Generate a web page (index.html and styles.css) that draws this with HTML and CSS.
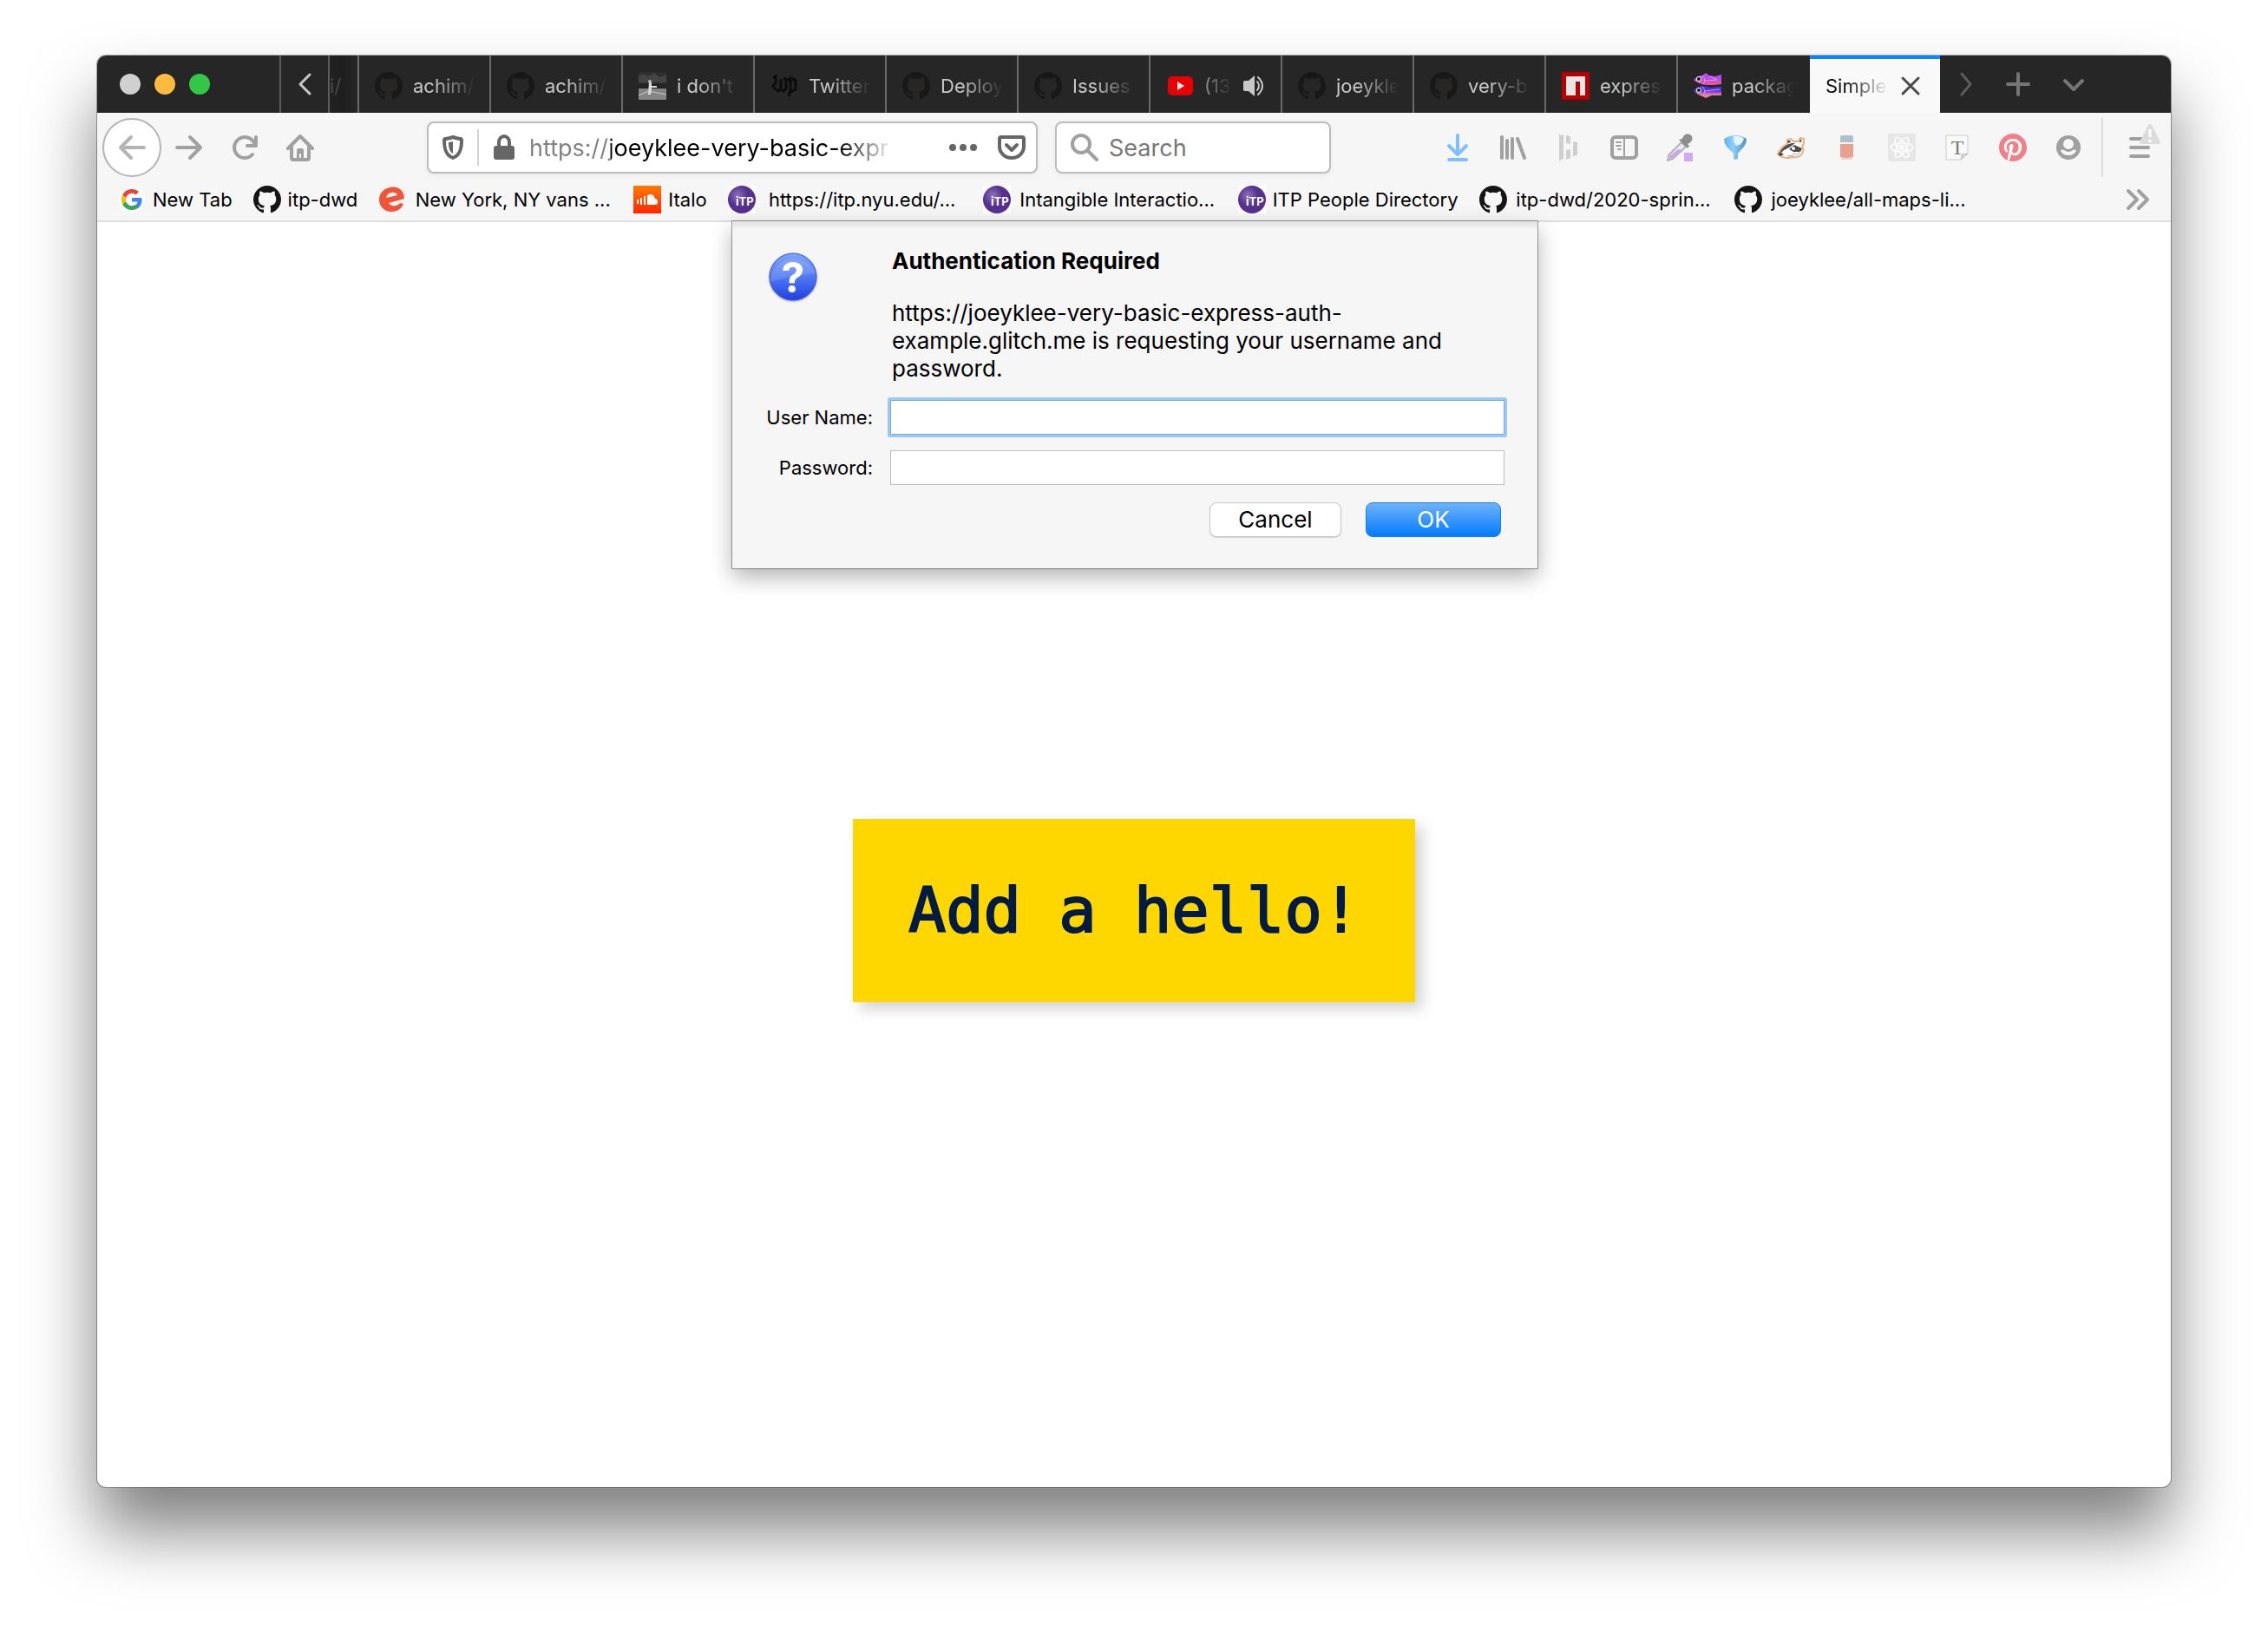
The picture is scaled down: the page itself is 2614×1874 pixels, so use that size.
FILE: index.html
```html
<!DOCTYPE html>
<html lang="en">
<head>
<meta charset="utf-8">
<title>Simple</title>
<link rel="stylesheet" href="styles.css">
</head>
<body>
<svg class="sprite" aria-hidden="true">
  <symbol id="github" viewBox="0 0 16 16"><path d="M8 0C3.58 0 0 3.58 0 8c0 3.54 2.29 6.53 5.47 7.59.4.07.55-.17.55-.38 0-.19-.01-.82-.01-1.49-2.01.37-2.53-.49-2.69-.94-.09-.23-.48-.94-.82-1.13-.28-.15-.68-.52-.01-.53.63-.01 1.08.58 1.23.82.72 1.21 1.87.87 2.33.66.07-.52.28-.87.51-1.07-1.78-.2-3.64-.89-3.64-3.95 0-.87.31-1.59.82-2.15-.08-.2-.36-1.02.08-2.12 0 0 .67-.21 2.2.82.64-.18 1.32-.27 2-.27s1.36.09 2 .27c1.53-1.04 2.2-.82 2.2-.82.44 1.1.16 1.92.08 2.12.51.56.82 1.27.82 2.15 0 3.07-1.87 3.75-3.65 3.95.29.25.54.73.54 1.48 0 1.07-.01 1.93-.01 2.2 0 .21.15.46.55.38A8.01 8.01 0 0 0 16 8c0-4.42-3.58-8-8-8z" fill="currentColor"/></symbol>
  <symbol id="itp" viewBox="0 0 32 32"><rect width="32" height="32" fill="#fff"/><circle cx="16" cy="16" r="16" fill="url(#itp-fill)"/><text x="9" y="23" class="itp-text">iTP</text></symbol>
  <linearGradient id="sc-fill" x1="0" y1="0" x2="0" y2="1"><stop offset="0" stop-color="#ff7a00"/><stop offset="1" stop-color="#ff2600"/></linearGradient>
  <radialGradient id="itp-fill" cx=".35" cy=".35" r=".6"><stop offset="0" stop-color="#8c74bb"/><stop offset=".6" stop-color="#55308f"/><stop offset="1" stop-color="#55308f"/></radialGradient>
  <linearGradient id="fish-top" x1="0" y1="0" x2="0" y2="1"><stop offset="0" stop-color="#b44cf0"/><stop offset=".5" stop-color="#b44cf0"/><stop offset="1" stop-color="#f0606a"/></linearGradient>
  <linearGradient id="fish-low" x1="0" y1="0" x2="0" y2="1"><stop offset=".4" stop-color="#4a32ee"/><stop offset=".7" stop-color="#f07a9a"/></linearGradient>
  <linearGradient id="funnel" x1="0" y1="0" x2="1" y2="0"><stop offset="0" stop-color="#5fb0ea"/><stop offset=".4" stop-color="#8fd0fa"/><stop offset="1" stop-color="#4a8fc4"/></linearGradient>
  <linearGradient id="ask" x1="0" y1="0" x2="0" y2="1"><stop offset="0" stop-color="#7fa6f8"/><stop offset=".5" stop-color="#5078f2"/><stop offset="1" stop-color="#1f3fe6"/></linearGradient>
</svg>

<div class="window">
  <header class="titlebar">
    <div class="lights">
      <button class="light light-close" aria-label="Close"></button>
      <button class="light light-min" aria-label="Minimize"></button>
      <button class="light light-max" aria-label="Zoom"></button>
    </div>
    <button class="scroll-left" aria-label="Scroll tabs left"><svg class="icon" viewBox="0 0 32 32"><path d="M22 5 11 16l11 11" class="line line-3"/></svg></button>
    <div class="tab-sliver"><span>i/</span></div>
    <nav class="tabs" aria-label="Tabs">
      <button class="tab"><svg class="icon dark"><use href="#github"/></svg><span class="tab-label">achim/</span></button>
      <button class="tab"><svg class="icon dark"><use href="#github"/></svg><span class="tab-label">achim/</span></button>
      <button class="tab"><svg class="icon" viewBox="0 0 32 32"><rect width="32" height="32" fill="#2e2e2e"/><path d="M0 4l6-2 5 3 7-4 6 5 8-3v9H0z" fill="#444"/><path d="M0 14h32v5H0z" fill="#222"/><path d="M0 19h32v13H0z" fill="#858585"/><path d="M0 27l12-5 20 4" stroke="#c8c8c8" fill="none"/><path d="M12 12h3v7l-1 7h-3z" fill="#ddd"/><path d="M14 17h7" stroke="#ddd" stroke-width="2"/><circle cx="13" cy="11" r="2" fill="#bbb"/></svg><span class="tab-label">i don't</span></button>
      <button class="tab"><svg class="icon" viewBox="0 0 32 32"><path d="M3 7l3-2v8l-3 3 2 3 4 3 3-3V8M12 11v9l3 2 3-3V8l-3-1M20 10l3-3v15l-2 6M23 10l4-2 2 2v10l-4 2-2-2" fill="none" stroke="#0c0c0c" stroke-width="3"/></svg><span class="tab-label">Twitter</span></button>
      <button class="tab"><svg class="icon dark"><use href="#github"/></svg><span class="tab-label">Deploy</span></button>
      <button class="tab"><svg class="icon dark"><use href="#github"/></svg><span class="tab-label">Issues</span></button>
      <button class="tab tab-audio"><svg class="icon" viewBox="0 0 32 32"><rect x="2" y="5" width="29" height="22" rx="5" fill="#e60000"/><path d="M13 11v10l8-5z" fill="#eee"/></svg><span class="tab-label">(13</span><svg class="icon" viewBox="0 0 32 32"><path d="M3 12q0-2 2-2h4l7-6v24l-7-6H5q-2 0-2-2z" fill="#c8c8c8"/><path d="M19 11q4 5 0 10M20 6q10 10 0 20" class="line"/></svg></button>
      <button class="tab"><svg class="icon dark"><use href="#github"/></svg><span class="tab-label">joeykle</span></button>
      <button class="tab"><svg class="icon dark"><use href="#github"/></svg><span class="tab-label">very-b</span></button>
      <button class="tab"><svg class="icon" viewBox="0 0 32 32"><rect width="32" height="32" fill="#b80000"/><path d="M5 5h22v22h-6V11h-5v16H5z" fill="#e6e6e6"/></svg><span class="tab-label">expres</span></button>
      <button class="tab"><svg class="icon" viewBox="0 0 32 32"><path d="M0 9Q5 4 10 4l4-3 4 3 7 1 7-2v11l-9 1-8 0Q5 14 0 9z" fill="url(#fish-top)"/><path d="M0 21q5-5 11-5l8 2 13-1v10l-11 0-7 3-4-2Q3 26 0 21z" fill="url(#fish-low)"/><path d="M10 4q5 5 1 10M13 10l14-1-9-4M10 17q5 5 1 10M13 22l17-2" fill="none" stroke="#e890ff"/><circle cx="6" cy="8" r="3" fill="#eee"/><circle cx="6" cy="8" r="2" fill="#111"/><circle cx="6" cy="21" r="3" fill="#eee"/><circle cx="6" cy="21" r="2" fill="#111"/></svg><span class="tab-label">packag</span></button>
      <button class="tab tab-active"><span class="tab-label">Simple</span><svg class="icon icon-close" viewBox="0 0 32 32"><path d="M7 7l18 18M25 7 7 25" class="line line-3"/></svg></button>
    </nav>
    <div class="tab-tools">
      <button aria-label="Scroll tabs right"><svg class="icon" viewBox="0 0 32 32"><path d="M11 4l10 12-10 12" class="line line-3"/></svg></button>
      <button aria-label="New tab" class="bright"><svg class="icon" viewBox="0 0 32 32"><path d="M16 4v24M4 16h24" class="line line-4"/></svg></button>
      <button aria-label="List all tabs" class="bright wide"><svg class="icon" viewBox="0 0 32 32"><path d="M6 12l10 10 10-10" class="line line-4"/></svg></button>
    </div>
  </header>

  <div class="toolbar">
    <button class="back" aria-label="Back"><svg class="icon" viewBox="0 0 32 32"><path d="M30 16H3M15 4 3 16l12 12" class="line line-4"/></svg></button>
    <button class="tool" aria-label="Forward"><svg class="icon" viewBox="0 0 32 32"><path d="M2 16h27M17 4l12 12-12 12" class="line line-4"/></svg></button>
    <button class="tool" aria-label="Reload"><svg class="icon" viewBox="0 0 32 32"><path d="M25 24A12 12 0 1 1 27 11" class="line line-4"/><path d="M29 4v10H19" class="line line-4"/></svg></button>
    <button class="tool" aria-label="Home"><svg class="icon" viewBox="0 0 32 32"><path d="M2 17 16 3l14 14M6 15v13q0 2 2 2h16q2 0 2-2V15" class="line line-4"/><path d="M12 29V19q0-2 2-2h4q2 0 2 2v10h-3v-6h-2v6z" fill="currentColor"/></svg></button>

    <div class="urlbar">
      <button class="url-shield" aria-label="Tracking protection"><svg class="icon" viewBox="0 0 32 32"><path d="M16 4q6 2 9 2c1 0 1 1 1 2 0 10-2 17-10 20C8 25 6 18 6 8c0-1 0-2 1-2q3 0 9-2z" class="line line-4"/><path d="M16 9v14c-4-2-5-7-5-13q2 0 5-1z" fill="currentColor"/></svg></button>
      <button class="url-lock" aria-label="Site information"><svg class="icon" viewBox="0 0 32 32"><rect x="4" y="14" width="24" height="16" rx="3" fill="currentColor"/><path d="M10 15v-5a6 7 0 0 1 12 0v5" class="line line-4"/></svg></button>
      <input class="url-input" type="text" aria-label="Address" value="https://joeyklee-very-basic-expr">
      <button class="url-tool" aria-label="Page actions"><svg class="icon" viewBox="0 0 32 32"><circle cx="4" cy="16" r="4" fill="currentColor"/><circle cx="16" cy="16" r="4" fill="currentColor"/><circle cx="28" cy="16" r="4" fill="currentColor"/></svg></button>
      <button class="url-tool" aria-label="Save to Pocket"><svg class="icon" viewBox="0 0 32 32"><path d="M4 4h24q2 0 2 2v9a14 13 0 0 1-28 0V6q0-2 2-2z" class="line line-4"/><path d="M10 13l6 6 6-6" class="line line-4"/></svg></button>
    </div>

    <div class="search">
      <svg class="icon" viewBox="0 0 32 32"><circle cx="12" cy="12" r="10" class="line line-4"/><path d="M19 19l11 11" class="line line-4"/></svg>
      <input type="text" placeholder="Search" aria-label="Search">
    </div>

    <div class="extensions">
      <button class="tool blue" aria-label="Downloads"><svg class="icon" viewBox="0 0 32 32"><path d="M16 2v22M6 14l10 10 10-10M6 30h20" class="line line-4"/></svg></button>
      <button class="tool" aria-label="Library"><svg class="icon" viewBox="0 0 32 32"><path d="M3 4v24M9 8v20M15 6v22M21 6l8 22" class="line line-4"/></svg></button>
      <button class="tool faint" aria-label="Markup"><svg class="icon" viewBox="0 0 32 32"><path d="M5 1l5 1v27l-5 2zM13 2l5 1v9l-5-1zM13 19l5-1v10l-5 2zM21 9l5 1v15l-5 1z" fill="currentColor"/></svg></button>
      <button class="tool" aria-label="Sidebars"><svg class="icon" viewBox="0 0 32 32"><rect x="2" y="4" width="28" height="24" rx="4" class="line line-4"/><path d="M16 4v24M7 10h5M7 14h5M9 18h3" class="line"/></svg></button>
      <button class="tool" aria-label="Color picker"><svg class="icon" viewBox="0 0 32 32"><path d="M18 10l5 5L8 29l-6 2 1-6z" fill="#f0eaf8" stroke="#b4b4b4" stroke-width="2"/><path d="M4 26l10-8 4 1L8 28l-4 1z" fill="#c8a4f2"/><path d="M15 7l10 10 2-3-2-2q7-3 5-9-4-5-9-1l-3 5-1-1z" fill="#8e8e8e"/><rect x="21" y="22" width="10" height="10" fill="#cfa8fa"/></svg></button>
      <button class="tool" aria-label="Filter"><svg class="icon" viewBox="0 0 32 32"><path d="M3 6q13-8 26 0 0 5-3 9l-7 8v6q-3 2-5 0v-6l-8-8q-3-4-3-9z" fill="url(#funnel)"/><path d="M14 3q8-1 12 3-2 7-9 8-4-5-3-11z" fill="#e4f4fe"/></svg></button>
      <button class="tool" aria-label="Privacy Badger"><svg class="icon" viewBox="0 0 32 32"><path d="M1 24q3-8 11-12l0-5 4-1 3 3 6 0 2-4 4 1 0 5-2 4q3 4 0 8-3 5-11 4-9 3-17-3z" fill="#fff" stroke="#eeb07a" stroke-width="2"/><path d="M3 22Q8 13 17 11l4 0-7 5-6 3-4 4zM14 18l6-5 9 4-2 4-8 0zM1 23l4-1 3 2-4 2zM12 8l3 0 1 2-3 1zM27 6l2 3-3 1z" fill="#4a4a4a"/><circle cx="19" cy="17" r="2" fill="#fff"/><path d="M12 26q8 0 9-4M22 25q4-2 5-5" fill="none" stroke="#999"/></svg></button>
      <button class="tool" aria-label="Eraser"><svg class="icon" viewBox="0 0 32 32"><path d="M9 10V4q0-2 2-2h11q2 0 2 2v6z" fill="#b0c0d0"/><path d="M9 12h15v15q-8 2-15 0z" fill="#e8a090"/><path d="M10 29h13" stroke="#e8b0a0" stroke-width="1"/></svg></button>
      <button class="tool" aria-label="React Developer Tools"><svg class="icon" viewBox="0 0 32 32"><rect width="32" height="32" rx="2" fill="#e6e6e6"/><g fill="none" stroke="#fafafa" stroke-width="2"><ellipse cx="16" cy="16" rx="13" ry="5"/><ellipse cx="16" cy="16" rx="13" ry="5" transform="rotate(60 16 16)"/><ellipse cx="16" cy="16" rx="13" ry="5" transform="rotate(120 16 16)"/></g><circle cx="16" cy="16" r="3" fill="#fafafa"/></svg></button>
      <button class="tool" aria-label="Text tool"><svg class="icon" viewBox="0 0 32 32"><path d="M3 2h25v21l-8 7H3z" fill="#f9f9f9" stroke="#ccc"/><path d="M28 23l-8 7 1-6z" fill="#ddd" stroke="#bbb"/><text x="16" y="24" class="t-text">T</text></svg></button>
      <button class="tool" aria-label="Pinterest"><svg class="icon" viewBox="0 0 24 24"><circle cx="12" cy="12" r="11" fill="#fff"/><path fill="#f08088" d="M12 0C5.373 0 0 5.372 0 12c0 5.084 3.163 9.426 7.627 11.174-.105-.949-.2-2.405.042-3.441.218-.937 1.407-5.965 1.407-5.965s-.359-.719-.359-1.782c0-1.668.967-2.914 2.171-2.914 1.023 0 1.518.769 1.518 1.69 0 1.029-.655 2.568-.994 3.995-.283 1.194.599 2.169 1.777 2.169 2.133 0 3.772-2.249 3.772-5.495 0-2.873-2.064-4.882-5.012-4.882-3.414 0-5.418 2.561-5.418 5.207 0 1.031.397 2.138.893 2.738a.36.36 0 0 1 .083.345l-.333 1.36c-.053.22-.174.267-.402.161-1.499-.698-2.436-2.889-2.436-4.649 0-3.785 2.75-7.262 7.929-7.262 4.163 0 7.398 2.967 7.398 6.931 0 4.136-2.607 7.464-6.227 7.464-1.216 0-2.359-.631-2.75-1.378l-.748 2.853c-.271 1.043-1.002 2.35-1.492 3.146C9.57 23.812 10.763 24 12 24c6.627 0 12-5.373 12-12 0-6.628-5.373-12-12-12z"/></svg></button>
      <button class="tool" aria-label="Account"><svg class="icon" viewBox="0 0 32 32"><circle cx="16" cy="16" r="14" fill="currentColor"/><circle cx="16" cy="12" r="6" fill="#f6f6f6"/><path d="M7 19q2-1 4 0 5 4 10 0 2-1 4 0-2 6-9 6t-9-6z" fill="#f6f6f6"/></svg></button>
    </div>
    <button class="menu" aria-label="Open menu">
      <svg class="icon" viewBox="0 0 32 32"><path d="M6 6h20M6 16h20M6 26h20" class="line line-4"/></svg>
      <svg class="menu-alert" viewBox="0 0 24 24"><path d="M10 2q2-3 4 0l10 20q0 2-2 2H2q-2 0-2-2z" fill="#dcdcdc"/><path d="M12 7v9M12 19v3" stroke="#fff" stroke-width="3"/></svg>
    </button>
  </div>

  <nav class="bookmarks" aria-label="Bookmarks">
    <a href="#" class="bookmark"><svg class="icon" viewBox="0 0 32 32"><circle cx="16" cy="16" r="15" fill="#fff"/><g transform="translate(4 4)"><path fill="#4285f4" d="M23.500 12.300c0-.9-.1-1.500-.2-2.200H12v4.500h6.600c-.3 1.500-1.100 2.700-2.400 3.600v3h3.900c2.200-2.100 3.400-5.200 3.400-8.900z"/><path fill="#34a853" d="M12 24c3.200 0 6-1.100 8-2.900l-3.900-3c-1.100.7-2.400 1.200-4.100 1.200-3.200 0-5.800-2.100-6.800-5H1.300v3.100C3.300 21.300 7.300 24 12 24z"/><path fill="#fbbc05" d="M5.200 14.300a7 7 0 0 1 0-4.600V6.600H1.300a12 12 0 0 0 0 10.800z"/><path fill="#ea4335" d="M12 4.700c1.800 0 3.300.6 4.600 1.800L20 3.100C17.900 1.200 15.200 0 12 0 7.300 0 3.300 2.700 1.300 6.600l3.900 3.100c1-2.900 3.600-5 6.800-5z"/></g></svg><span>New Tab</span></a>
    <a href="#" class="bookmark"><svg class="icon black"><use href="#github"/></svg><span>itp-dwd</span></a>
    <a href="#" class="bookmark bookmark-full"><svg class="icon" viewBox="0 0 32 32"><path d="M14 2C23 0 30 6 30 15L12 20q3 4 8 3 4-1 5-3l4 1c-2 6-8 9-14 9C7 30 1 24 1 16 1 9 6 3 14 2z" fill="#f05537"/><path d="M9 14q1-5 6-6 5-1 7 3z" fill="#f6f6f6"/></svg><span>New York, NY vans ...</span></a>
    <a href="#" class="bookmark"><svg class="icon" viewBox="0 0 32 32"><rect width="32" height="32" fill="url(#sc-fill)"/><path d="M5 16v5M9 14v8M13 12v10" stroke="#fff" stroke-width="2"/><path d="M16 11q7-3 9 4 3 0 3 4 0 3-3 3H16z" fill="#fff"/></svg><span>Italo</span></a>
    <a href="#" class="bookmark bookmark-full"><svg class="icon"><use href="#itp"/></svg><span>https://itp.nyu.edu/...</span></a>
    <a href="#" class="bookmark bookmark-full"><svg class="icon"><use href="#itp"/></svg><span>Intangible Interactio...</span></a>
    <a href="#" class="bookmark"><svg class="icon"><use href="#itp"/></svg><span>ITP People Directory</span></a>
    <a href="#" class="bookmark bookmark-full"><svg class="icon black"><use href="#github"/></svg><span>itp-dwd/2020-sprin...</span></a>
    <a href="#" class="bookmark bookmark-full"><svg class="icon black"><use href="#github"/></svg><span>joeyklee/all-maps-li...</span></a>
    <button class="overflow" aria-label="More bookmarks"><svg class="icon" viewBox="0 0 32 32"><path d="M5 6l10 10L5 26M17 6l10 10-10 10" class="line line-4"/></svg></button>
  </nav>

  <main class="page">
    <button class="hello">Add a hello!</button>

    <dialog class="auth" open aria-labelledby="auth-title">
      <form class="auth-form">
        <svg class="auth-icon" viewBox="0 0 56 56" aria-hidden="true"><circle cx="28" cy="28" r="27" fill="url(#ask)" stroke="#3a55d8" stroke-width="1"/><path d="M2 34A27 27 0 0 1 54 24Q28 26 2 34z" fill="#fff" opacity=".12"/><text x="28" y="46" class="ask-text">?</text></svg>
        <div class="auth-copy">
          <h1 id="auth-title">Authentication Required</h1>
          <p>https://joeyklee-very-basic-express-auth-<wbr>example.glitch.me is requesting your username and password.</p>
        </div>
        <label for="user">User Name:</label>
        <input id="user" class="focused" type="text">
        <label for="pass">Password:</label>
        <input id="pass" type="password">
        <div class="auth-actions">
          <button type="button" class="btn btn-cancel">Cancel</button>
          <button type="button" class="btn btn-ok">OK</button>
        </div>
      </form>
    </dialog>
  </main>
</div>
</body>
</html>
```
FILE: styles.css
```css
* { box-sizing: border-box; }

body {
  margin: 0;
  min-height: 100vh;
  padding: 64px 112px 160px;
  display: flex;
  background: #fff;
  color: #000;
  font-family: Inter, "Liberation Sans", sans-serif;
  font-size: 22px;
}

button, input {
  font: inherit;
  color: inherit;
  margin: 0;
  padding: 0;
  border: 0;
  background: none;
}

.sprite { position: absolute; width: 0; height: 0; }
.icon { width: 32px; height: 32px; flex: none; display: block; }
.line { fill: none; stroke: currentColor; stroke-width: 2; stroke-linecap: round; stroke-linejoin: round; }
.line-3 { stroke-width: 3; }
.line-4 { stroke-width: 4; }
.dark { color: #1a1817; }
.black { color: #161414; }

.window {
  flex: 1;
  min-width: 0;
  display: flex;
  flex-direction: column;
  border-radius: 10px;
  background: #fff;
  box-shadow: 0 0 0 1px rgba(0, 0, 0, .32), 0 50px 78px rgba(0, 0, 0, .5);
}

/* Title bar and tabs */
.titlebar {
  display: flex;
  height: 66px;
  border-radius: 10px 10px 0 0;
  background: #262626;
  color: #c8c8c8;
}
.lights { flex: 0 0 210px; display: flex; align-items: center; gap: 16px; padding-left: 26px; }
.light { width: 24px; height: 24px; border-radius: 50%; }
.light-close { background: #d0d0d0; }
.light-min { background: #fdbc40; }
.light-max { background: #33c748; }
.scroll-left {
  flex: 0 0 56px;
  display: flex;
  align-items: center;
  justify-content: center;
  border-left: 2px solid #5c5c5c;
}
.tab-sliver {
  flex: 0 0 34px;
  display: flex;
  align-items: center;
  padding-top: 4px;
  border-left: 2px solid #5c5c5c;
  color: #484848;
  background: linear-gradient(90deg, #222, #1e1e1e 50%, #262626);
}
.tabs { display: flex; min-width: 0; }
.tab {
  flex: 0 0 152px;
  display: flex;
  align-items: center;
  gap: 12px;
  padding: 4px 14px 0 18px;
  border-left: 2px solid #6a6a6a;
  overflow: hidden;
}
.tab-label {
  flex: 1;
  min-width: 0;
  overflow: hidden;
  white-space: nowrap;
  text-align: left;
  mask-image: linear-gradient(90deg, #000 calc(100% - 50px), transparent calc(100% - 2px));
}
.tab-audio { gap: 8px; }
.tab-audio .tab-label { padding-left: 4px; }
.tab-active {
  padding-right: 18px;
  gap: 8px;
  background: #f9f9fa linear-gradient(#0a84ff, #0a84ff) no-repeat top / 100% 4px;
  color: #0c0c0d;
  border-left-color: #262626;
  background-clip: padding-box;
}
.icon-close { color: #4a4a4a; }
.tab-tools { display: flex; color: #5c5c5c; }
.tab-tools button { width: 60px; display: flex; align-items: center; justify-content: center; }
.tab-tools .bright { color: #757575; }
.tab-tools .wide { width: 68px; }

/* Navigation toolbar */
.toolbar {
  display: flex;
  align-items: center;
  height: 80px;
  padding-left: 6px;
  background: #f6f6f6;
  color: #a0a0a0;
}
.back {
  flex: 0 0 68px;
  height: 68px;
  display: flex;
  align-items: center;
  justify-content: center;
  border: 2px solid #b4b4b4;
  border-radius: 50%;
  background: #fff;
  color: #b4b4b4;
}
.tool { flex: 0 0 64px; height: 64px; display: flex; align-items: center; justify-content: center; }
.blue { color: #7fbfff; }
.faint { color: #cfcfcf; }

.urlbar, .search {
  display: flex;
  align-items: center;
  height: 60px;
  border: 2px solid #bcbcbc;
  border-radius: 8px;
  background: #fff;
  box-shadow: 0 2px 6px rgba(0, 0, 0, .06);
  font-size: 27px;
}
.urlbar { flex: 1; min-width: 0; margin: 0 20px 0 114px; color: #666; }
.url-shield, .url-lock, .url-tool { flex: 0 0 56px; height: 42px; display: flex; align-items: center; justify-content: center; }
.url-lock { flex-basis: 60px; border-left: 2px solid #d4d4d4; }
.url-input {
  flex: 1;
  min-width: 0;
  height: 56px;
  margin-right: 48px;
  outline: 0;
  color: transparent;
  background: linear-gradient(90deg, #808080 94px, #000 94px, #000 calc(100% - 68px), transparent calc(100% - 4px));
  background-clip: text;
}
.search { flex: 0 0 318px; min-width: 0; padding-left: 16px; gap: 12px; color: #a0a0a0; }
.search input { flex: 1; min-width: 0; height: 56px; }
.search input::placeholder { color: #777; opacity: 1; }

.extensions { display: flex; margin-left: 114px; }
.menu {
  flex: 0 0 80px;
  height: 68px;
  margin-left: 6px;
  padding-left: 26px;
  border-left: 2px solid #dcdcdc;
  position: relative;
  display: flex;
  align-items: center;
}
.menu-alert { position: absolute; top: 6px; right: 12px; width: 24px; height: 24px; }

/* Bookmarks */
.bookmarks {
  display: flex;
  align-items: center;
  height: 46px;
  padding: 0 22px 4px 12px;
  border-bottom: 2px solid #dedede;
  background: #f6f6f6;
}
.bookmark {
  display: flex;
  align-items: center;
  gap: 8px;
  padding: 0 12px;
  color: #000;
  text-decoration: none;
  white-space: nowrap;
}
.bookmark-full { flex: 0 0 294px; }
.bookmark-full span { flex: 1; text-align: center; }
.overflow { margin-left: auto; color: #a0a0a0; }
.itp-text { font: bold 13px Inter, sans-serif; fill: #fff; }
.t-text { font: 24px "Liberation Serif", serif; fill: #777; text-anchor: middle; }

/* Page */
.page {
  flex: 1;
  position: relative;
  display: flex;
  align-items: center;
  justify-content: center;
  padding-top: 128px;
}
.hello {
  padding: 64px;
  background: #ffd700;
  color: #001b44;
  font-family: "DejaVu Sans Mono", monospace;
  font-size: 72px;
  line-height: 83px;
  -webkit-text-stroke: 2px #001b44;
  box-shadow: 8px 8px 16px rgba(0, 0, 0, .18);
}

/* Authentication dialog */
.auth {
  position: absolute;
  top: -1px;
  left: 2px;
  right: 0;
  width: 928px;
  margin: 0 auto;
  padding: 30px 38px 36px 42px;
  border: 0;
  background: linear-gradient(#e2e2e2, #ececec 6px, #f6f6f6 9px);
  color: #000;
  box-shadow: 0 0 0 1px rgba(0, 0, 0, .35), 0 10px 24px rgba(0, 0, 0, .3);
}
.auth-form {
  display: grid;
  grid-template-columns: 120px 1fr;
  column-gap: 20px;
  row-gap: 18px;
  align-items: center;
}
.auth-icon { width: 56px; height: 56px; margin-top: 6px; align-self: start; filter: drop-shadow(0 1px 1px rgba(0, 0, 0, .4)); }
.ask-text { font: bold 48px Inter, sans-serif; fill: #fff; text-anchor: middle; }
.auth-copy { padding: 0 60px 2px 2px; font-size: 26px; line-height: 32px; }
.auth-copy h1 { margin: 0 0 28px; font-size: 26px; font-weight: 700; }
.auth-copy p { margin: 0; }
.auth-form label { justify-self: end; white-space: nowrap; }
.auth-form input { height: 40px; padding: 0 8px; border: 1px solid #bdbdbd; background: #fff; }
.auth-form .focused { border-color: #7dacdd; box-shadow: 0 0 0 3px #9ac8fa; border-radius: 1px; }
.auth-actions { grid-column: 1 / -1; display: flex; justify-content: flex-end; gap: 28px; padding: 2px 4px 0 0; }
.btn { width: 156px; height: 40px; border-radius: 8px; font-size: 26px; line-height: 38px; }
.btn-cancel { width: 152px; border: 1px solid #c6c6c6; background: #fff; box-shadow: 0 1px 1px rgba(0, 0, 0, .15); }
.btn-ok { border: 1px solid #1a7cf5; background: linear-gradient(#6db3fa, #047aff); color: #fff; }
```
